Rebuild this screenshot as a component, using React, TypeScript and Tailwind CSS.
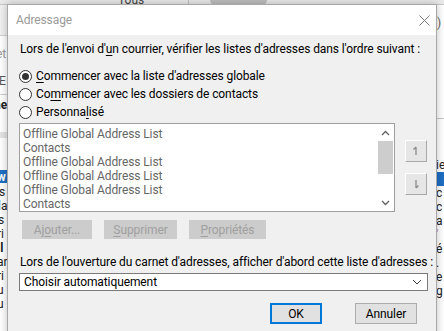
import React from "react";

const font = { fontFamily: 'Roboto, "Noto Sans", Arial, sans-serif' };

function U({ children }: { children: React.ReactNode }) {
  return <span className="underline underline-offset-2 decoration-1">{children}</span>;
}

function Radio({ checked, children }: { checked?: boolean; children: React.ReactNode }) {
  return (
    <div className="flex items-center gap-[4px] h-[18px]">
      <span className="w-[13px] h-[13px] rounded-full border border-[#333] bg-white flex items-center justify-center">
        {checked && <span className="w-[7px] h-[7px] rounded-full bg-[#333]" />}
      </span>
      <span>{children}</span>
    </div>
  );
}

function Arrow({ up }: { up?: boolean }) {
  return (
    <svg width="8" height="10" viewBox="0 0 8 10" className={up ? "" : "rotate-180"}>
      <path d="M4 1 L4 9 M4 1 L1.5 3.5" stroke="#8a8a8a" strokeWidth="1.3" fill="none" />
    </svg>
  );
}

const items = [
  "Offline Global Address List",
  "Contacts",
  "Offline Global Address List",
  "Offline Global Address List",
  "Offline Global Address List",
  "Contacts",
];

export default function App() {
  return (
    <div className="relative w-[444px] h-[331px] overflow-hidden bg-white text-[12px] whitespace-nowrap" style={font}>
      {/* outlook window behind */}
      <div className="absolute left-0 top-0 w-[444px] h-[5px] bg-[#e9e9e9] border-b border-[#c8c8c8]" />
      <div className="absolute left-[118px] top-[-9px] text-[12px] text-[#444]">Tous</div>
      <div className="absolute left-[188px] top-0 w-px h-[5px] bg-[#c0c0c0]" />
      <div className="absolute left-[210px] top-0 w-[57px] h-[5px] rounded-b-[6px] bg-[#bdbdbd]" />
      <div className="absolute left-0 top-[5px] w-[7px] h-[30px] bg-[#f0f0f0]" />
      <div className="absolute left-0 top-[35px] w-[7px] h-[1px] bg-[#d0d0d0]" />
      <div className="absolute left-[-4px] top-[45px] text-[12px] text-[#999]">et</div>
      <div className="absolute left-[-1px] top-[72px] text-[12px] text-[#555]">E</div>
      <div className="absolute left-0 top-[94px] w-[7px] h-[1px] bg-[#d0d0d0]" />
      <div className="absolute left-[-6px] top-[96px] text-[12px] font-bold text-[#222]">ne</div>
      <div className="absolute left-0 top-[132px] w-[7px] h-[6px] bg-[#e4e4e4]" />
      <div className="absolute left-0 top-[170px] w-[7px] h-[13px] bg-[#1e6fc4]" />
      <div className="absolute left-[-3px] top-[168px] text-[12px] font-bold text-white">w</div>
      <div className="absolute left-0 top-[185px] flex flex-col text-[12px] leading-[14px] text-[#222]">
        <span className="-ml-[1px]">s</span>
        <span className="-ml-[2px]">la</span>
        <span className="-ml-[2px]">s</span>
        <span className="-ml-[3px]">ri</span>
        <span className="-ml-[3px] font-bold">il</span>
        <span className="-ml-[3px]">ar</span>
        <span className="-ml-[3px]">ri</span>
        <span className="-ml-[3px]">u</span>
        <span className="-ml-[3px]">u</span>
      </div>
      <div className="absolute left-[436px] top-[5px] w-[8px] h-[326px] bg-white" />
      <div className="absolute left-[437px] top-[14px] text-[12px] text-[#666]">)</div>
      <div className="absolute left-[436px] top-[118px] w-[8px] h-[1px] bg-[#c8c8c8]" />
      <div className="absolute left-[436px] top-[156px] text-[12px] text-[#222]">ie</div>
      <div className="absolute left-[436px] top-[172px] w-[8px] h-[14px] bg-[#1e6fc4]" />
      <div className="absolute left-[436px] top-[186px] flex flex-col text-[12px] leading-[14px] text-[#222]">
        <span>c</span>
        <span>c</span>
        <span>a</span>
        <span className="text-[#c0501c]">'</span>
        <span>é</span>
        <span>.</span>
        <span>e</span>
        <span>g</span>
      </div>

      {/* dialog */}
      <div className="absolute left-[7px] top-[4px] w-[430px] h-[340px] border border-[#a8a8a8] bg-[#f0f0f0] shadow-[0_0_8px_rgba(0,0,0,0.25)] flex flex-col tracking-[-0.1px]">
        <div className="h-[30px] bg-white flex items-center justify-between pl-[8px] pr-[6px]">
          <span className="text-[#9a9a9a] text-[12px]">Adressage</span>
          <svg width="11" height="11" viewBox="0 0 11 11">
            <path d="M0.5 0.5 L10.5 10.5 M10.5 0.5 L0.5 10.5" stroke="#7a7a7a" strokeWidth="1" />
          </svg>
        </div>
        <div className="flex flex-col pl-[11px] pr-[8px] pt-[6px] text-black">
          <div className="h-[16px] leading-[16px] pl-[1px]">
            Lors de l'envoi d'<U>u</U>n courrier, vérifier les listes d'adresses dans l'ordre suivant :
          </div>
          <div className="flex flex-col mt-[10px]">
            <Radio checked>
              <U>C</U>ommencer avec la liste d'adresses globale
            </Radio>
            <Radio>
              Co<U>m</U>mencer avec les dossiers de contacts
            </Radio>
            <Radio>
              Personna<U>l</U>isé
            </Radio>
          </div>
          <div className="flex mt-[2px]">
            <div className="w-[376px] h-[89px] border border-[#a0a0a0] bg-white flex">
              <div className="flex-1 flex flex-col pt-[3px] pl-[3px] text-[#666] leading-[14px]">
                {items.map((it, i) => (
                  <span key={i} className="h-[14px]">
                    {it}
                  </span>
                ))}
              </div>
              <div className="w-[17px] flex flex-col items-center bg-white">
                <div className="h-[17px] flex items-center justify-center">
                  <svg width="9" height="6" viewBox="0 0 9 6">
                    <path d="M1 5 L4.5 1.5 L8 5" stroke="#606060" strokeWidth="1.3" fill="none" />
                  </svg>
                </div>
                <div className="w-[15px] h-[33px] bg-[#cdcdcd]" />
                <div className="flex-1" />
                <div className="h-[17px] flex items-center justify-center">
                  <svg width="9" height="6" viewBox="0 0 9 6">
                    <path d="M1 1 L4.5 4.5 L8 1" stroke="#606060" strokeWidth="1.3" fill="none" />
                  </svg>
                </div>
              </div>
            </div>
            <div className="flex flex-col ml-[10px] pt-[17px] gap-[11px]">
              <div className="w-[22px] h-[22px] bg-[#e6e6e6] border border-t-white border-l-white border-r-[#a8a8a8] border-b-[#a8a8a8] flex items-center justify-center">
                <Arrow up />
              </div>
              <div className="w-[22px] h-[22px] bg-[#e6e6e6] border border-t-white border-l-white border-r-[#a8a8a8] border-b-[#a8a8a8] flex items-center justify-center">
                <Arrow />
              </div>
            </div>
          </div>
          <div className="flex gap-[12px] mt-[8px] pl-[3px] text-[#a0a0a0]">
            <div className="w-[70px] h-[19px] bg-[#cccccc] flex items-center justify-center">
              Aj<U>o</U>uter...
            </div>
            <div className="w-[73px] h-[19px] bg-[#cccccc] flex items-center justify-center">
              <U>S</U>upprimer
            </div>
            <div className="w-[77px] h-[19px] bg-[#cccccc] flex items-center justify-center">
              <U>P</U>ropriétés
            </div>
          </div>
          <div className="h-[16px] leading-[16px] mt-[15px] pl-[1px]">
            Lors de l'ouverture du carnet d'adresses, afficher d'abord cette liste d'adresses :
          </div>
          <div className="w-[409px] h-[18px] mt-[3px] border border-[#7a7a7a] bg-white flex items-center justify-between pl-[4px] pr-[5px]">
            <span>Choisir automatiquement</span>
            <svg width="10" height="6" viewBox="0 0 10 6">
              <path d="M1 1 L5 5 L9 1" stroke="#444" strokeWidth="1" fill="none" />
            </svg>
          </div>
          <div className="flex justify-end gap-[33px] mt-[12px] pr-[11px]">
            <div className="w-[52px] h-[21px] bg-[#e1e1e1] border-2 border-[#0078d7] flex items-center justify-center">
              OK
            </div>
            <div className="w-[62px] h-[21px] bg-[#e1e1e1] border border-[#adadad] flex items-center justify-center">
              Annuler
            </div>
          </div>
        </div>
      </div>
    </div>
  );
}
